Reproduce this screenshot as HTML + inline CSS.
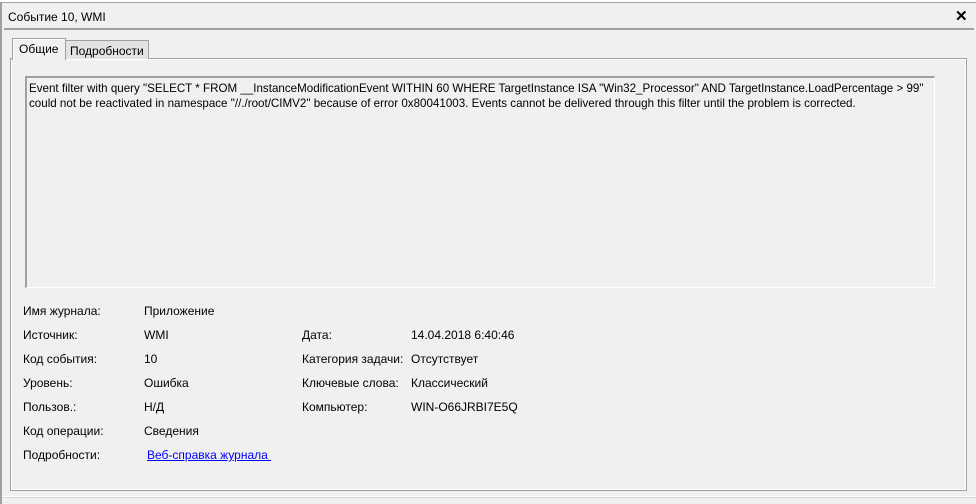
<!DOCTYPE html>
<html><head><meta charset="utf-8"><style>
*{margin:0;padding:0;box-sizing:border-box}
body{width:976px;height:504px;background:#f0f0f0;font-family:"Liberation Sans","Noto Sans CJK SC",sans-serif;font-size:12px;color:#000;position:relative;overflow:hidden}
.a{position:absolute;white-space:nowrap}
</style></head><body>
<div class="a" style="left:0;top:0;width:976px;height:3px;background:#fff;border-bottom:1px solid #a0a0a0"></div>
<div class="a" style="left:0;top:3px;width:2px;height:501px;background:#a0a0a0"></div>
<div class="a" style="left:8px;top:10px;font-size:12px">Событие 10, WMI</div>
<div class="a" style="left:955px;top:7px;font-size:15px;font-weight:bold">✕</div>
<div class="a" style="left:4px;top:28px;width:970px;height:2px;background:#a0a0a0"></div>
<div class="a" style="left:10px;top:58px;width:957px;height:433px;border:1px solid #a0a0a0;background:#f0f0f0;box-shadow:inset 1px 1px 0 #fff,inset -1px -1px 0 #fff"></div>
<div class="a" style="left:65px;top:40px;width:84px;height:19px;border:1px solid #a0a0a0;border-bottom:none;background:#e3e3e3;padding:3px 0 0 4px">Подробности</div>
<div class="a" style="left:12px;top:38px;width:54px;height:22px;border:1px solid #a0a0a0;border-bottom:none;background:#f0f0f0;padding:3px 0 0 6px;box-shadow:inset 1px 1px 0 #fff">Общие</div>
<div class="a" style="left:25px;top:76px;width:910px;height:212px;border-top:2px solid #a0a0a0;border-left:2px solid #a0a0a0;border-right:1px solid #fff;border-bottom:1px solid #fff;background:#f0f0f0;padding:3px 0 0 2px;white-space:nowrap;overflow:hidden;line-height:15px;font-size:11.6px">Event filter with query "SELECT * FROM __InstanceModificationEvent WITHIN 60 WHERE TargetInstance ISA "Win32_Processor" AND TargetInstance.LoadPercentage &gt; 99"<br>could not be reactivated in namespace "//./root/CIMV2" because of error 0x80041003. Events cannot be delivered through this filter until the problem is corrected.</div>
<div class="a" style="left:23px;top:304px">Имя журнала:</div><div class="a" style="left:144px;top:304px">Приложение</div>
<div class="a" style="left:23px;top:328px">Источник:</div><div class="a" style="left:144px;top:328px">WMI</div>
<div class="a" style="left:23px;top:352px">Код события:</div><div class="a" style="left:144px;top:352px">10</div>
<div class="a" style="left:23px;top:376px">Уровень:</div><div class="a" style="left:144px;top:376px">Ошибка</div>
<div class="a" style="left:23px;top:400px">Пользов.:</div><div class="a" style="left:144px;top:400px">Н/Д</div>
<div class="a" style="left:23px;top:424px">Код операции:</div><div class="a" style="left:144px;top:424px">Сведения</div>
<div class="a" style="left:23px;top:448px">Подробности:</div><div class="a" style="left:147px;top:448px;color:#0000ff;text-decoration:underline">Веб-справка журнала&nbsp;</div>
<div class="a" style="left:302px;top:328px">Дата:</div><div class="a" style="left:411px;top:328px">14.04.2018 6:40:46</div>
<div class="a" style="left:302px;top:352px">Категория задачи:</div><div class="a" style="left:411px;top:352px">Отсутствует</div>
<div class="a" style="left:302px;top:376px">Ключевые слова:</div><div class="a" style="left:411px;top:376px">Классический</div>
<div class="a" style="left:302px;top:400px">Компьютер:</div><div class="a" style="left:411px;top:400px">WIN-O66JRBI7E5Q</div>
<div class="a" style="left:2px;top:496px;width:974px;height:1px;background:#fff"></div>
<div class="a" style="left:2px;top:497px;width:974px;height:1px;background:#d8d8d8"></div>
</body></html>
